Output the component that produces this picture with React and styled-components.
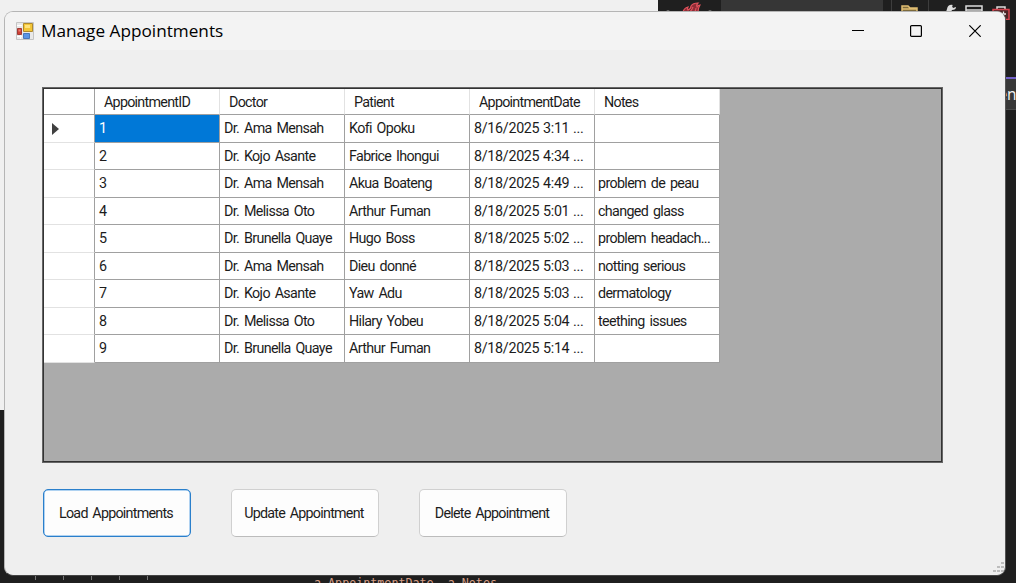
import React from "react";
import styled, { createGlobalStyle } from "styled-components";

const Global = createGlobalStyle`
  * { box-sizing: border-box; }
  html, body { margin: 0; padding: 0; overflow: hidden; background: #1f1f1f; }
`;

const Desktop = styled.main`
  position: relative;
  width: 1016px;
  height: 583px;
  overflow: hidden;
  background: #1f1f1f;
  display: flex;
  flex-direction: column;
  justify-content: space-between;
`;

const Backdrop = styled.div`
  display: flex;
  justify-content: space-between;
  align-items: flex-start;
`;

const PaleWindow = styled.div`
  width: 658px;
  height: 410px;
  background: #f0f0f0;
`;

const IdeSide = styled.div`
  width: 358px;
  display: flex;
  flex-direction: column;
  align-items: flex-end;
  gap: 57px;
`;

const IdeTab = styled.div`
  width: 18px;
  height: 33px;
  border-top: 2px solid #7160c8;
  border-bottom: 1px solid #4a4a4a;
  background: #383838;
  color: #f4f4f4;
  font: 15.5px/31px "Open Sans", sans-serif;
  letter-spacing: -0.4px;
  text-align: right;
  white-space: nowrap;
`;

const CodeStrip = styled.div`
  height: 8px;
  display: flex;
  overflow: hidden;
`;

const Guides = styled.div`
  width: 314px;
  padding-left: 35px;
  display: flex;
  gap: 27px;
`;

const Guide = styled.i`
  width: 1px;
  height: 8px;
  background: repeating-linear-gradient(#777 0 5px, transparent 5px 8px);
`;

const CodeText = styled.pre`
  margin: 0;
  color: #d69d85;
  font: 11.7px/16px "DejaVu Sans Mono", monospace;
`;

const Window = styled.section`
  position: absolute;
  left: 4px;
  top: 11px;
  width: 1002px;
  height: 565px;
  border: 1px solid #b5b5b5;
  border-right-color: #555;
  border-bottom-color: #444;
  border-radius: 9px;
  background: #efefef;
  overflow: hidden;
  display: flex;
  flex-direction: column;
`;

const TitleBar = styled.header`
  flex: none;
  height: 38px;
  padding: 0 1px 0 11px;
  background: #f3f3f3;
  display: flex;
  align-items: center;
`;

const Title = styled.h1`
  margin: 0 auto 0 7px;
  color: #000;
  font: 400 17.2px/36px "Open Sans", "Noto Sans", sans-serif;
`;

const CaptionButton = styled.button`
  width: 58.5px;
  height: 38px;
  padding: 0;
  border: 0;
  background: none;
  display: grid;
  place-items: center;
`;

const Body = styled.div`
  padding: 37px 0 0 37px;
  display: flex;
  flex-direction: column;
  gap: 26px;
`;

const GridFrame = styled.div`
  width: 901px;
  height: 376px;
  padding: 1px;
  border: 1px solid #666;
  box-shadow: inset 0 0 0 1px #333;
  background: #ababab;
`;

const Table = styled.table`
  width: 676px;
  border-collapse: separate;
  border-spacing: 0;
  table-layout: fixed;
  color: #1c1c1c;
  font: 14.3px/20px Roboto, "Liberation Sans", sans-serif;
  letter-spacing: -0.65px;
  word-spacing: 1.9px;
`;

const HeadCell = styled.th`
  height: 26px;
  padding: 1px 0 0 9px;
  border-right: 1px solid ${(p) => (p.$corner ? "#a0a0a0" : "#e2e2e2")};
  border-bottom: 1px solid #a0a0a0;
  background: #fff;
  font-weight: 400;
  letter-spacing: -0.73px;
  text-align: left;
  white-space: nowrap;
`;

const Row = styled.tr`
  height: ${(p) => (p.$tall ? 28 : 27)}px;
`;

const RowHead = styled.td`
  padding: 0 0 0 8px;
  border-right: 1px solid #a0a0a0;
  border-bottom: 1px solid #e2e2e2;
  background: #fff;
  line-height: 0;
`;

const Cell = styled.td`
  padding: 0 0 1px ${(p) => (p.$tight ? 3 : 4)}px;
  border-right: 1px solid #a0a0a0;
  border-bottom: 1px solid #a0a0a0;
  background: ${(p) => (p.$selected ? "#0078d7" : "#fff")};
  color: ${(p) => (p.$selected ? "#fff" : "inherit")};
  letter-spacing: ${(p) => (p.$numeric ? "-0.3px" : "inherit")};
  word-spacing: ${(p) => (p.$numeric ? "0.4px" : "inherit")};
  white-space: nowrap;
  overflow: hidden;
`;

const Actions = styled.div`
  display: flex;
  gap: 40px;
`;

const ActionButton = styled.button`
  width: 148px;
  height: 48px;
  padding: 0 2px 1px 0;
  border: 1px solid ${(p) => (p.$focused ? "#2a7fcb" : "#d0d0d0")};
  border-bottom-color: ${(p) => (p.$focused ? "#2a7fcb" : "#bcbcbc")};
  border-radius: 5px;
  background: #fdfdfd;
  color: #1c1c1c;
  font: 14.3px/20px Roboto, "Liberation Sans", sans-serif;
  letter-spacing: -0.75px;
  word-spacing: 1.8px;
  box-shadow: ${(p) => (p.$focused ? "inset 0 0 0 0.5px #63a7e5" : "none")};

  &:first-child {
    margin-left: 1px;
  }
`;

const SizeGrip = styled.svg`
  position: absolute;
  right: 0;
  bottom: 1px;
`;

const columns = ["AppointmentID", "Doctor", "Patient", "AppointmentDate", "Notes"];

const rows = [
  ["1", "Dr. Ama Mensah", "Kofi Opoku", "8/16/2025 3:11 ...", ""],
  ["2", "Dr. Kojo Asante", "Fabrice Ihongui", "8/18/2025 4:34 ...", ""],
  ["3", "Dr. Ama Mensah", "Akua Boateng", "8/18/2025 4:49 ...", "problem de peau"],
  ["4", "Dr. Melissa Oto", "Arthur Fuman", "8/18/2025 5:01 ...", "changed glass"],
  ["5", "Dr. Brunella Quaye", "Hugo Boss", "8/18/2025 5:02 ...", "problem headach..."],
  ["6", "Dr. Ama Mensah", "Dieu donné", "8/18/2025 5:03 ...", "notting serious"],
  ["7", "Dr. Kojo Asante", "Yaw Adu", "8/18/2025 5:03 ...", "dermatology"],
  ["8", "Dr. Melissa Oto", "Hilary Yobeu", "8/18/2025 5:04 ...", "teething issues"],
  ["9", "Dr. Brunella Quaye", "Arthur Fuman", "8/18/2025 5:14 ...", ""],
];

function ToolbarIcons() {
  return (
    <svg width="358" height="20" viewBox="658 0 358 20">
      <path d="M721 0H883V12H721Z" fill="#363636" />
      <path d="M891.5 0V12M928.5 0V12" stroke="#3d3d3d" />
      <path
        d="M683 12q1-4 5-5-1 2 0 3 3-1 3-4 2-3 7-3-2 2-1 4 1-2 3-2-2 3-2 7M688 12q3 0 5-5M694 12q2-1 2-4"
        fill="#8f2c36"
        stroke="#e0525c"
        strokeWidth="1.2"
      />
      <path d="M664 12q4-2 8 0M706 12q4-2 8 0" stroke="#ddd" fill="none" />
      <path d="M902 13V6h6l2 2h7v5M902 9h15" stroke="#dfbd72" strokeWidth="1.5" fill="#7c6a3c" />
      <path d="M953 5q-5-1-6 4l-1 3h5l1-2q4 0 4-3l-3 1-1-2z" fill="#ddd" />
      <path d="M966 13V6h16v7M966 10h16" stroke="#ddd" strokeWidth="1.5" fill="none" />
      <path d="M997 9V7h8v2" stroke="#ddd" strokeWidth="1.5" fill="none" />
      <path d="M993 9.500h16v10h-16z" stroke="#d8434f" strokeWidth="1.5" fill="#4b2527" />
      <path d="M1001 14h5M1003.500 11.500v5" stroke="#eee" strokeWidth="1.3" />
    </svg>
  );
}

function FormIcon() {
  return (
    <svg width="18" height="18" viewBox="0 0 18 18">
      <path d="M.5.5h17v17H.5z" fill="#e9e9e9" stroke="#c4c4c4" />
      <path d="M1 3.500h5M1 14.500h5M4.500 13v4" stroke="#fff" />
      <path d="M7.500 1.500h9v8h-9z" fill="#f3c637" stroke="#b08a2c" />
      <path d="M9 3h5v3H9z" fill="#ffe37c" />
      <path d="M1.500 6.500h4v6h-4z" fill="#cf3f33" stroke="#a03a35" />
      <path d="M2.500 7.500h2v2h-2z" fill="#e98077" />
      <path d="M7.500 11.500h6v5h-6z" fill="#5b95e6" stroke="#4a78bb" />
    </svg>
  );
}

export default function App() {
  return (
    <Desktop>
      <Global />
      <Backdrop>
        <PaleWindow />
        <IdeSide>
          <ToolbarIcons />
          <IdeTab>en</IdeTab>
        </IdeSide>
      </Backdrop>
      <CodeStrip>
        <Guides>{[0, 1, 2, 3, 4].map((n) => <Guide key={n} />)}</Guides>
        <CodeText>a.AppointmentDate, a.Notes</CodeText>
      </CodeStrip>
      <Window>
        <TitleBar>
          <FormIcon />
          <Title>Manage Appointments</Title>
          <CaptionButton aria-label="Minimize">
            <svg width="12" height="12"><path d="M0 5.500h12" stroke="#000" /></svg>
          </CaptionButton>
          <CaptionButton aria-label="Maximize">
            <svg width="12" height="12"><rect x=".6" y=".6" width="10.8" height="10.8" rx="1" fill="none" stroke="#000" strokeWidth="1.2" /></svg>
          </CaptionButton>
          <CaptionButton aria-label="Close">
            <svg width="12" height="12"><path d="M.3.3l11.400 11.400M11.700.3L.3 11.700" stroke="#000" strokeWidth="1.2" /></svg>
          </CaptionButton>
        </TitleBar>
        <Body>
          <GridFrame>
            <Table>
              <colgroup>
                <col style={{ width: 51 }} />
                {columns.map((c) => <col key={c} style={{ width: 125 }} />)}
              </colgroup>
              <thead>
                <tr>
                  <HeadCell $corner />
                  {columns.map((c) => <HeadCell key={c}>{c}</HeadCell>)}
                </tr>
              </thead>
              <tbody>
                {rows.map((r, i) => (
                  <Row key={r[0]} $tall={i % 2 === 0}>
                    <RowHead>
                      {i === 0 && <svg width="7" height="12"><path d="M0 0l7 6-7 6z" fill="#404040" /></svg>}
                    </RowHead>
                    {r.map((v, j) => (
                      <Cell key={j} $selected={i === 0 && j === 0} $numeric={j === 3} $tight={j === 4}>
                        {v}
                      </Cell>
                    ))}
                  </Row>
                ))}
              </tbody>
            </Table>
          </GridFrame>
          <Actions>
            <ActionButton $focused>Load Appointments</ActionButton>
            <ActionButton>Update Appointment</ActionButton>
            <ActionButton>Delete Appointment</ActionButton>
          </Actions>
        </Body>
        <SizeGrip width="12" height="12" fill="#bdbdbd">
          <path d="M8 0h3v2H8zM4 4h3v2H4zM8 4h3v2H8zM0 8h3v2H0zM4 8h3v2H4zM8 8h3v2H8z" />
        </SizeGrip>
      </Window>
    </Desktop>
  );
}
